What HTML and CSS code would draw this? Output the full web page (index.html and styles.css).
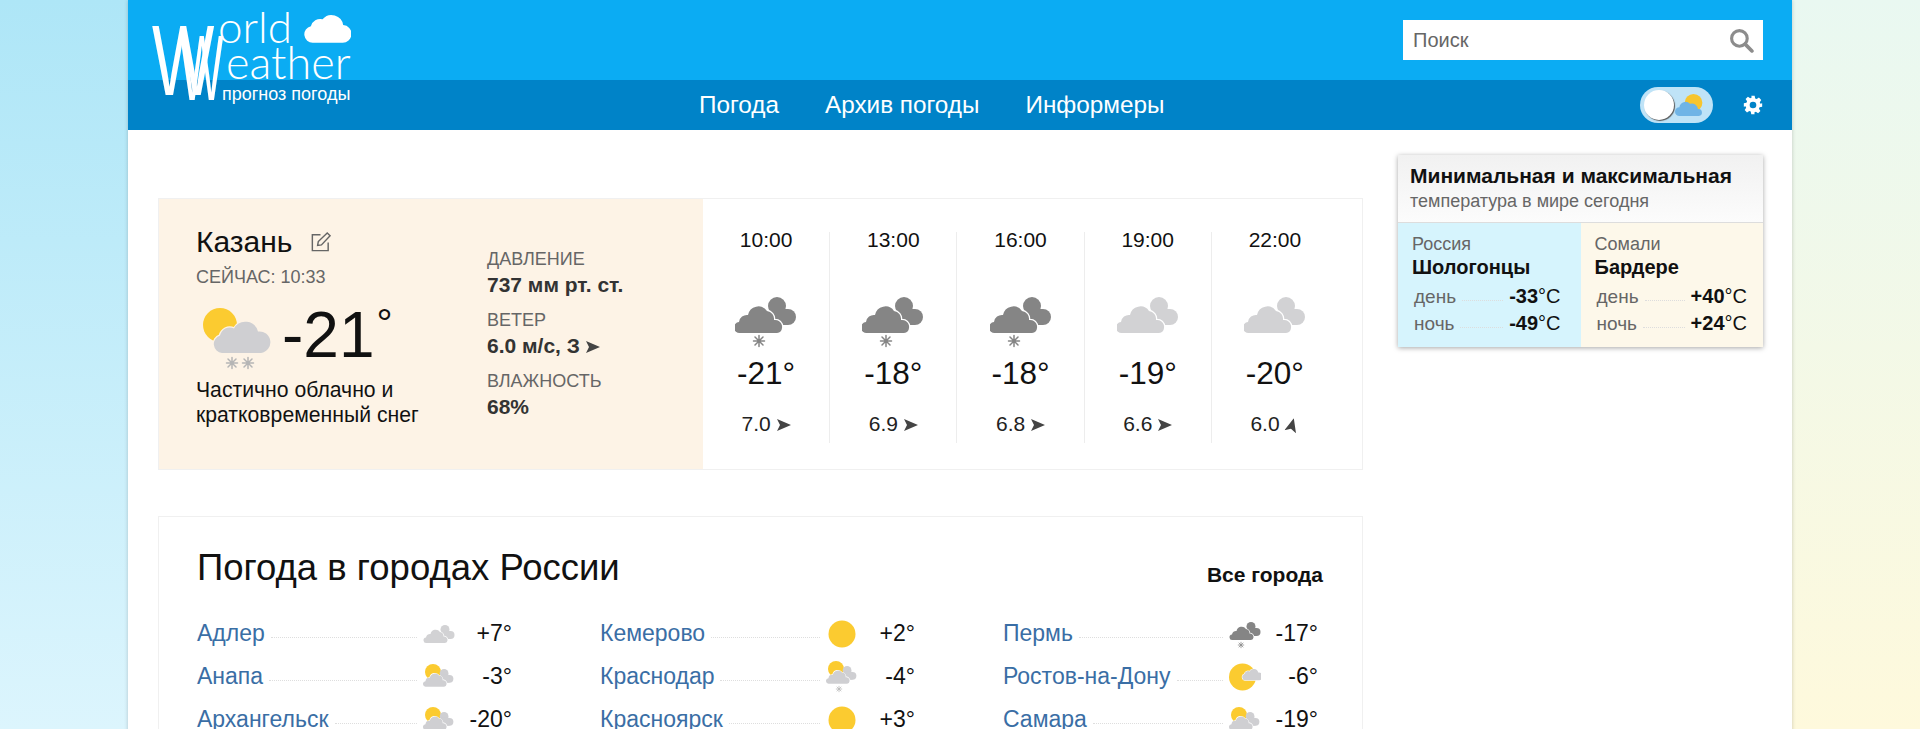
FILE: index.html
```html
<!DOCTYPE html>
<html lang="ru">
<head>
    <meta charset="UTF-8">
    <title>World Weather</title>
    <link rel="stylesheet" href="styles.css">
</head>
<body>
    <svg width="0" height="0" class="defs">
        <defs>
            <path id="cloud" d="M9 34a9 9 0 0 1-2-17.500a10 10 0 0 1 14-7a13 13 0 0 1 24 3a10.500 10.500 0 0 1 3 21.500z"/>
            <path id="cloud-front" d="M5 36a5.500 5.500 0 0 1-1-11a8 8 0 0 1 9-7a10.500 10.500 0 0 1 19-4a8 8 0 0 1 7 9a7 7 0 0 1 8 8a5.500 5.500 0 0 1-5 5z"/>
            <g id="flake" fill="none" stroke-width="1.500" stroke-linecap="round">
                <path d="M0-5.500V5.500M-5.500 0H5.500M-4-4L4 4M-4 4L4-4"/>
            </g>
            <g id="two-clouds">
                <circle cx="42" cy="9" r="9"/>
                <circle cx="53" cy="20" r="8"/>
                <rect x="36" y="12" width="17" height="16"/>
                <use href="#cloud-front" stroke="#fff" stroke-width="2.500" paint-order="stroke"/>
            </g>
            <g id="sun-clouds">
                <circle cx="20" cy="18" r="16" fill="#fbcb30"/>
                <use href="#two-clouds" fill="#cfcfd2" transform="translate(1 12) scale(.98)"/>
            </g>
        </defs>
    </svg>

    <div class="page">
        <header class="header">
            <div class="top-bar">
                <form class="search">
                    <span class="search-text">Поиск</span>
                    <svg class="search-icon" viewBox="0 0 24 24" width="25" height="25">
                        <circle cx="10" cy="10" r="7.500" fill="none" stroke="#8c8c8c" stroke-width="3"/>
                        <path d="M15.500 15.500L22 22" stroke="#8c8c8c" stroke-width="3.500" stroke-linecap="round"/>
                    </svg>
                </form>
            </div>
            <nav class="nav">
                <a href="#">Погода</a>
                <a href="#">Архив погоды</a>
                <a href="#">Информеры</a>
                <div class="nav-tools">
                    <div class="toggle">
                        <span class="knob"></span>
                        <svg viewBox="0 0 34 28" width="30" height="25">
                            <circle cx="21" cy="11" r="10" fill="#f7c52e"/>
                            <path d="M5 26a5 5 0 0 1 0-10 7 7 0 0 1 12-4 7 7 0 0 1 9 6 4 4 0 0 1 1 8z" fill="#6fb4e6"/>
                        </svg>
                    </div>
                    <svg class="gear" viewBox="0 0 24 24" width="20" height="20">
                        <path fill="#fff" fill-rule="evenodd" d="M10 1h4l.6 3.100 1.800.8 2.700-1.800 2.800 2.800-1.800 2.700.8 1.800L23 10v4l-3.100.6-.8 1.800 1.800 2.700-2.800 2.800-2.700-1.800-1.800.8L13.900 23h-4l-.6-3.100-1.800-.8-2.700 1.800-2.800-2.800 1.800-2.700-.8-1.800L1 14v-4l3.100-.6.8-1.800-1.800-2.700 2.800-2.800 2.700 1.800 1.800-.8zM12 8a4 4 0 1 0 0 8 4 4 0 0 0 0-8z"/>
                    </svg>
                </div>
            </nav>
            <a class="logo" href="#">
                <span class="logo-w logo-w1">W</span>
                <span class="logo-w logo-w2">W</span>
                <span class="logo-line logo-orld">orld</span>
                <span class="logo-line logo-eather">eather</span>
                <span class="logo-sub">прогноз погоды</span>
                <svg class="logo-cloud" viewBox="0 0 48 32" width="47" height="32">
                    <path fill="#fff" d="M9 32a8.500 8.500 0 0 1-2-16.800A10 10 0 0 1 19 8a12 12 0 0 1 21 6 9 9 0 0 1-1 18z"/>
                </svg>
            </a>
        </header>

        <div class="content">
            <main class="main">
                <section class="now-card">
                    <div class="now">
                        <div class="now-left">
                            <h1 class="city">Казань
                                <svg viewBox="0 0 24 24" width="23" height="23" fill="none" stroke="#666" stroke-width="1.500">
                                    <path d="M12 4H3.500v16.500H20V12"/>
                                    <path d="M9 15l.7-4L19 2l3 3-9 9.500z"/>
                                </svg>
                            </h1>
                            <div class="now-time">СЕЙЧАС: 10:33</div>
                            <div class="now-temp">
                                <svg viewBox="0 0 72 72" width="72" height="72">
                                    <circle cx="19" cy="26" r="17" fill="#fbcb30"/>
                                    <use href="#cloud" transform="translate(12 20)" fill="#cfcfd2" stroke="#fdf3e6" stroke-width="2.500" paint-order="stroke"/>
                                    <use href="#flake" x="31" y="64" stroke="#b5b5b5"/>
                                    <use href="#flake" x="47" y="64" stroke="#b5b5b5"/>
                                </svg>
                                <span class="now-deg">-21<sup>°</sup></span>
                            </div>
                            <p class="now-desc">Частично облачно и<br>кратковременный снег</p>
                        </div>
                        <dl class="now-details">
                            <dt>ДАВЛЕНИЕ</dt>
                            <dd>737 мм рт. ст.</dd>
                            <dt>ВЕТЕР</dt>
                            <dd>6.0 м/с, З <svg class="arrow" viewBox="0 0 14 12" width="14" height="12"><path d="M0 0l14 6-14 6 3-6z"/></svg></dd>
                            <dt>ВЛАЖНОСТЬ</dt>
                            <dd>68%</dd>
                        </dl>
                    </div>
                    <div class="hours">
                        <div class="hour">
                            <div class="hour-time">10:00</div>
                            <svg class="hour-icon" viewBox="0 -1 62 52" width="62" height="52" fill="#858585">
                                <use href="#two-clouds"/>
                                <use href="#flake" x="24" y="44" stroke="#858585"/>
                            </svg>
                            <div class="hour-temp">-21°</div>
                            <div class="hour-wind">7.0 <svg class="arrow" viewBox="0 0 14 12" width="14" height="12"><path d="M0 0l14 6-14 6 3-6z"/></svg></div>
                        </div>
                        <div class="hour">
                            <div class="hour-time">13:00</div>
                            <svg class="hour-icon" viewBox="0 -1 62 52" width="62" height="52" fill="#858585">
                                <use href="#two-clouds"/>
                                <use href="#flake" x="24" y="44" stroke="#858585"/>
                            </svg>
                            <div class="hour-temp">-18°</div>
                            <div class="hour-wind">6.9 <svg class="arrow" viewBox="0 0 14 12" width="14" height="12"><path d="M0 0l14 6-14 6 3-6z"/></svg></div>
                        </div>
                        <div class="hour">
                            <div class="hour-time">16:00</div>
                            <svg class="hour-icon" viewBox="0 -1 62 52" width="62" height="52" fill="#858585">
                                <use href="#two-clouds"/>
                                <use href="#flake" x="24" y="44" stroke="#858585"/>
                            </svg>
                            <div class="hour-temp">-18°</div>
                            <div class="hour-wind">6.8 <svg class="arrow" viewBox="0 0 14 12" width="14" height="12"><path d="M0 0l14 6-14 6 3-6z"/></svg></div>
                        </div>
                        <div class="hour">
                            <div class="hour-time">19:00</div>
                            <svg class="hour-icon" viewBox="0 -1 62 52" width="62" height="52" fill="#d2d2d4">
                                <use href="#two-clouds"/>
                            </svg>
                            <div class="hour-temp">-19°</div>
                            <div class="hour-wind">6.6 <svg class="arrow" viewBox="0 0 14 12" width="14" height="12"><path d="M0 0l14 6-14 6 3-6z"/></svg></div>
                        </div>
                        <div class="hour">
                            <div class="hour-time">22:00</div>
                            <svg class="hour-icon" viewBox="0 -1 62 52" width="62" height="52" fill="#d2d2d4">
                                <use href="#two-clouds"/>
                            </svg>
                            <div class="hour-temp">-20°</div>
                            <div class="hour-wind">6.0 <svg class="arrow arrow-up" viewBox="0 0 14 12" width="14" height="12"><path d="M0 0l14 6-14 6 3-6z"/></svg></div>
                        </div>
                    </div>
                </section>

                <section class="cities">
                    <div class="cities-head">
                        <h2>Погода в городах России</h2>
                        <a href="#">Все города</a>
                    </div>
                    <div class="cities-grid">
                        <div class="city-row"><a href="#">Адлер</a><i></i>
                            <svg viewBox="0 0 64 56" width="32" height="28" fill="#d2d2d4"><use href="#two-clouds" transform="translate(2 10)"/></svg><b>+7°</b></div>
                        <div class="city-row"><a href="#">Кемерово</a><i></i>
                            <svg viewBox="0 0 64 56" width="32" height="28"><circle cx="32" cy="28" r="27" fill="#fbcb30"/></svg><b>+2°</b></div>
                        <div class="city-row"><a href="#">Пермь</a><i></i>
                            <svg viewBox="0 0 64 60" width="32" height="30" fill="#858585"><use href="#two-clouds" transform="translate(2 6)"/><use href="#flake" x="24" y="52" stroke="#858585"/></svg><b>-17°</b></div>
                        <div class="city-row"><a href="#">Анапа</a><i></i>
                            <svg viewBox="0 0 64 56" width="32" height="28"><use href="#sun-clouds"/></svg><b>-3°</b></div>
                        <div class="city-row"><a href="#">Краснодар</a><i></i>
                            <svg viewBox="0 0 64 66" width="32" height="33"><use href="#sun-clouds"/><use href="#flake" x="26" y="58" stroke="#b5b5b5"/></svg><b>-4°</b></div>
                        <div class="city-row"><a href="#">Ростов-на-Дону</a><i></i>
                            <svg viewBox="0 0 64 56" width="32" height="28"><circle cx="27" cy="28" r="27" fill="#fbcb30"/><use href="#cloud" transform="translate(26 10) scale(.72)" fill="#cfcfd2" stroke="#fff" stroke-width="3" paint-order="stroke"/></svg><b>-6°</b></div>
                        <div class="city-row"><a href="#">Архангельск</a><i></i>
                            <svg viewBox="0 0 64 56" width="32" height="28"><use href="#sun-clouds"/></svg><b>-20°</b></div>
                        <div class="city-row"><a href="#">Красноярск</a><i></i>
                            <svg viewBox="0 0 64 56" width="32" height="28"><circle cx="32" cy="28" r="27" fill="#fbcb30"/></svg><b>+3°</b></div>
                        <div class="city-row"><a href="#">Самара</a><i></i>
                            <svg viewBox="0 0 64 56" width="32" height="28"><use href="#sun-clouds"/></svg><b>-19°</b></div>
                    </div>
                </section>
            </main>

            <aside class="side">
                <div class="extremes">
                    <div class="extremes-head">
                        <strong>Минимальная и максимальная</strong>
                        <span>температура в мире сегодня</span>
                    </div>
                    <div class="extremes-body">
                        <div class="extreme extreme-cold">
                            <div class="country">Россия</div>
                            <div class="place">Шологонцы</div>
                            <div class="ext-row"><span>день</span><i></i><b>-33</b>°C</div>
                            <div class="ext-row"><span>ночь</span><i></i><b>-49</b>°C</div>
                        </div>
                        <div class="extreme extreme-hot">
                            <div class="country">Сомали</div>
                            <div class="place">Бардере</div>
                            <div class="ext-row"><span>день</span><i></i><b>+40</b>°C</div>
                            <div class="ext-row"><span>ночь</span><i></i><b>+24</b>°C</div>
                        </div>
                    </div>
                </div>
            </aside>
        </div>
    </div>
</body>
</html>
```

FILE: styles.css
```css
html, body {
    height: 100%;
    overflow: hidden;
}
body {
    margin: 0;
    background:
        linear-gradient(#aee6f7, #dcf5fd) left top / 50% 100% no-repeat,
        linear-gradient(#e9f8f1, #fef9dc) right top / 50% 100% no-repeat;
    font-family: "Liberation Sans", Arial, sans-serif;
    color: #111;
}
a {
    text-decoration: none;
}
.defs {
    position: absolute;
}
.page {
    width: 1664px;
    margin: 0 auto;
    background-color: #fff;
    min-height: 100%;
    box-shadow: 0 0 4px rgba(0, 0, 0, 0.2);
}

/* header */
.header {
    position: relative;
}
.top-bar {
    height: 80px;
    background-color: #0bacf3;
    display: flex;
    justify-content: flex-end;
    align-items: center;
    padding-right: 29px;
}
.search {
    width: 360px;
    height: 40px;
    box-sizing: border-box;
    background-color: #fff;
    display: flex;
    justify-content: space-between;
    align-items: center;
    padding: 0 9px 0 10px;
}
.search-text {
    font-size: 20px;
    color: #666;
}
.nav {
    height: 50px;
    background-color: #0083c8;
    display: flex;
    align-items: center;
    padding-left: 571px;
    gap: 46px;
}
.nav a {
    color: #fff;
    font-size: 24.300px;
}
.nav-tools {
    margin-left: auto;
    margin-right: 29px;
    display: flex;
    align-items: center;
    gap: 30px;
}
.toggle {
    width: 73px;
    height: 36px;
    box-sizing: border-box;
    border-radius: 18px;
    background-color: #bfe3f7;
    display: flex;
    align-items: center;
    padding-left: 4px;
    gap: 1px;
}
.knob {
    width: 30px;
    height: 30px;
    border-radius: 50%;
    background-color: #fff;
    box-shadow: 1px 1px 1px #555;
}

/* logo sits over both header bands */
.logo {
    position: absolute;
    left: 22px;
    top: 0;
    width: 240px;
    height: 110px;
    color: #fff;
    font-family: Lato, "Liberation Sans", sans-serif;
    font-weight: 300;
}
.logo-w, .logo-line, .logo-sub, .logo-cloud {
    position: absolute;
    line-height: 1;
}
.logo-w {
    font-family: "Liberation Sans", sans-serif;
    font-weight: 400;
    transform-origin: left top;
}
.logo-w1 {
    font-size: 100px;
    left: 2px;
    top: 10px;
    transform: scaleX(.66);
}
.logo-w2 {
    font-size: 92px;
    left: 30px;
    top: 22px;
    transform: scaleX(.5);
}
.logo-line {
    font-size: 44px;
}
.logo-orld {
    left: 68px;
    top: 4px;
}
.logo-eather {
    left: 76px;
    top: 40px;
    font-size: 45px;
}
.logo-sub {
    left: 72px;
    top: 85px;
    font-family: "Liberation Sans", sans-serif;
    font-weight: 400;
    font-size: 18px;
}
.logo-cloud {
    left: 154px;
    top: 11px;
}

/* layout */
.content {
    display: flex;
    padding: 25px 29px 0 30px;
    justify-content: space-between;
}
.main {
    width: 1205px;
    padding-top: 43px;
}
.side {
    width: 365px;
}

/* current weather */
.now-card {
    height: 272px;
    box-sizing: border-box;
    display: flex;
    border: 1px solid #f0f0f0;
}
.now {
    width: 544px;
    box-sizing: border-box;
    background-color: #fdf3e6;
    display: flex;
    padding: 23px 0 0 37px;
}
.now-left {
    width: 291px;
    flex: none;
}
.city {
    margin: 0;
    font-size: 30px;
    font-weight: 400;
    line-height: 40px;
    display: flex;
    align-items: center;
    gap: 17px;
}
.now-time {
    margin-top: 5px;
    font-size: 18px;
    color: #666;
}
.now-temp {
    display: flex;
    align-items: center;
    margin-top: 11px;
    height: 72px;
    padding-left: 5px;
    gap: 9px;
}
.now-deg {
    font-size: 64px;
    line-height: 72px;
}
.now-deg sup {
    font-size: 40px;
    line-height: 0;
    vertical-align: 20px;
    margin-left: 2px;
}
.now-desc {
    margin: 6px 0 0;
    font-size: 21.200px;
    line-height: 25px;
}
.now-details {
    margin: 26px 0 0;
}
.now-details dt {
    font-size: 18px;
    color: #666;
    line-height: 22px;
}
.now-details dd {
    margin: 3px 0 12px;
    font-size: 21px;
    font-weight: 700;
    color: #333;
    line-height: 24px;
}
.arrow {
    fill: #444;
}
.arrow-up {
    transform: rotate(-75deg);
}

/* hourly forecast */
.hours {
    display: flex;
    flex: 1;
    padding: 33px 24px 26px 0;
}
.hour {
    flex: 1;
    text-align: center;
    border-left: 1px solid #ededed;
}
.hour:first-child {
    border-left: none;
}
.hour-time {
    font-size: 21px;
    line-height: 16px;
}
.hour-icon {
    display: block;
    margin: 48px auto 0;
}
.hour-temp {
    font-size: 31.500px;
    line-height: 40px;
    margin-top: 5px;
}
.hour-wind {
    font-size: 21px;
    line-height: 24px;
    margin-top: 19px;
    color: #222;
}

/* cities */
.cities {
    margin-top: 46px;
    padding: 29px 39px 30px 38px;
    border: 1px solid #f0f0f0;
}
.cities-head {
    display: flex;
    justify-content: space-between;
    align-items: center;
}
.cities-head h2 {
    margin: 0;
    font-size: 36.500px;
    font-weight: 400;
    line-height: 44px;
}
.cities-head a {
    font-size: 21px;
    font-weight: 700;
    color: #111;
    padding-top: 14px;
}
.cities-grid {
    display: grid;
    grid-template-columns: repeat(3, 315px);
    column-gap: 88px;
    grid-auto-rows: 43px;
    margin-top: 22px;
}
.city-row {
    display: flex;
    align-items: center;
}
.city-row a {
    font-size: 23px;
    color: #3a6ea5;
}
.city-row i {
    flex: 1;
    margin: 8px 6px 0;
    border-bottom: 1px dotted #dedede;
}
.city-row b {
    width: 57px;
    text-align: right;
    font-size: 23px;
    font-weight: 400;
}

/* extremes */
.extremes {
    box-shadow: 0 1px 5px rgba(0, 0, 0, 0.35);
}
.extremes-head {
    height: 68px;
    box-sizing: border-box;
    padding: 9px 12px 0;
    background: linear-gradient(#f1f1f1, #fcfcfc);
    border-bottom: 1px solid #ddd;
}
.extremes-head strong {
    display: block;
    font-size: 21px;
    line-height: 24px;
}
.extremes-head span {
    display: block;
    font-size: 18px;
    line-height: 27px;
    color: #666;
}
.extremes-body {
    display: flex;
    height: 124px;
}
.extreme {
    width: 50%;
    box-sizing: border-box;
    padding: 10px 20px 0 14px;
}
.extreme-cold {
    background-color: #d6f4fd;
}
.extreme-hot {
    background-color: #fdf8ea;
    padding-right: 16px;
}
.country {
    font-size: 18px;
    line-height: 22px;
    color: #666;
}
.place {
    font-size: 20px;
    font-weight: 700;
    line-height: 24px;
    margin-bottom: 4px;
}
.ext-row {
    display: flex;
    align-items: center;
    font-size: 20px;
    line-height: 27px;
}
.ext-row span {
    color: #666;
    font-size: 19px;
    margin-left: 2px;
}
.ext-row i {
    flex: 1;
    margin: 8px 6px 0;
    border-bottom: 1px dotted #ddd;
}
```
